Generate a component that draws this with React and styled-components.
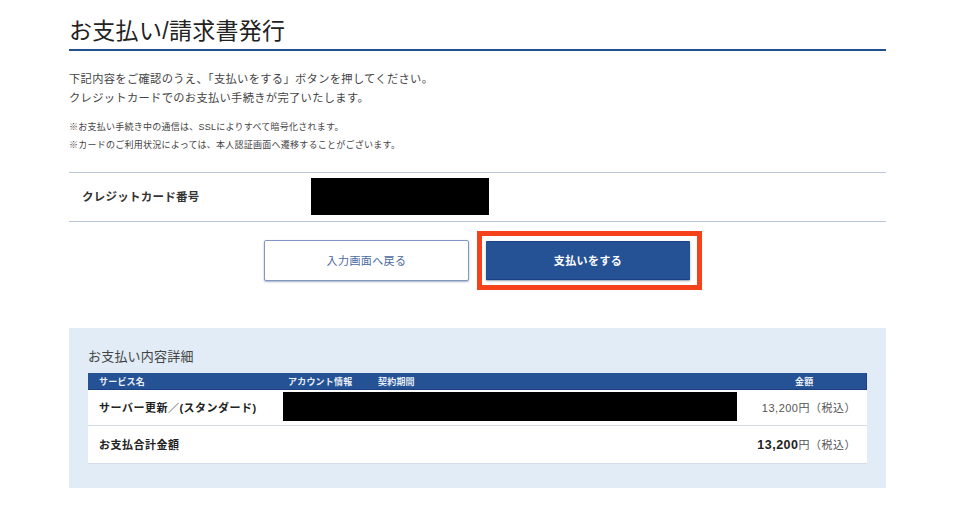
import React from 'react';
import styled, { createGlobalStyle } from 'styled-components';

const Global = createGlobalStyle`
  html, body { margin: 0; padding: 0; background: #fff; }
  body { font-family: "Liberation Sans", "Noto Sans CJK JP", sans-serif; color: #333; }
`;
const Page = styled.div`
  width: 817px; height: 523px; margin-left: 69px; padding-top: 16px; box-sizing: border-box; overflow: hidden;
`;
const Title = styled.h1`
  margin: 0; height: 35px; box-sizing: border-box; border-bottom: 2px solid #24508f;
  font-size: 23px; line-height: 30px; font-weight: 400; color: #222; letter-spacing: 0.3px;
`;
const Lead = styled.p`
  margin: 19px 0 0; font-size: 11.25px; line-height: 19px; color: #444; letter-spacing: 0.33px;
`;
const Notes = styled.div`
  margin-top: 11px; font-size: 9px; line-height: 17.5px; color: #444; letter-spacing: 0.25px;
`;
const CardRow = styled.div`
  margin-top: 18px; height: 50px; box-sizing: border-box; padding-bottom: 2px;
  border-top: 1px solid #b9c7d8; border-bottom: 1px solid #b9c7d8;
  display: grid; grid-template-columns: 242px 178px; align-items: center;
`;
const CardLabel = styled.div`
  padding-left: 13px; font-size: 11.5px; font-weight: 700; color: #333; letter-spacing: 0.25px;
`;
const Redacted = styled.div`
  background: #000; height: ${p => p.$h}px;
`;
const Actions = styled.div`
  margin-top: 8px; height: 60px; display: flex; align-items: center; padding-left: 195px;
`;
const BackButton = styled.button`
  width: 205px; height: 41px; box-sizing: border-box; padding: 0; background: #fff; border: 1px solid #7f97c2; border-radius: 2px;
  box-shadow: 0 1px 2px rgba(60,80,120,.45); color: #4a6a9f; font: 400 11px "Liberation Sans", "Noto Sans CJK JP", sans-serif; letter-spacing: 0.4px;
`;
const Highlight = styled.div`
  margin-left: 8px; width: 225px; height: 59px; box-sizing: border-box; border: 5px solid #f5421a;
  display: flex; align-items: center; padding-left: 4px;
`;
const PayButton = styled.button`
  width: 204px; height: 39px; padding: 0; box-sizing: border-box; background: #245294; border: 0; border-top: 1px solid #1c3f85; border-bottom: 1px solid #1c3f85; border-radius: 1px;
  box-shadow: 0 1px 2px rgba(40,60,100,.5); color: #fff; font: 700 11px "Liberation Sans", "Noto Sans CJK JP", sans-serif; letter-spacing: 0.4px;
`;
const Panel = styled.section`
  margin-top: 38px; height: 160px; box-sizing: border-box; background: #e1ecf6; padding: 20px 19px 0;
`;
const PanelTitle = styled.h2`
  margin: 0; height: 25px; font-size: 13px; line-height: 18px; font-weight: 400; color: #444; letter-spacing: 0.2px;
`;
const HeaderRow = styled.div`
  height: 17px; box-sizing: border-box; background: #245294; border: 1px solid #1c3f85; border-width: 0 1px 1px 0; color: #e8eef7;
  display: grid; grid-template-columns: 189px 90px 1fr 71px; align-items: center; padding-left: 11px;
  font-size: 9px; font-weight: 700; letter-spacing: 0.2px;
`;
const Row = styled.div`
  height: ${p => p.$h}px; box-sizing: border-box; background: #fff; border-bottom: 1px solid #d3dde9;
  display: flex; align-items: center; padding: 0 11px 2px; font-size: 11px; color: #444;
`;
const RowName = styled.div`
  font-weight: 700; color: #222; letter-spacing: 0.5px; width: ${p => p.$w}px; flex: none; white-space: nowrap;
`;
const Price = styled.div`
  margin-left: auto; letter-spacing: 0.5px; color: #555; white-space: nowrap;
`;
const Strong = styled.b`
  color: #222; font-size: 12.5px;
`;
const BlackCell = styled(Redacted)`
  width: 454px; flex: none;
`;

export default function App() {
  return (
    <Page>
      <Global />
      <Title>お支払い/請求書発行</Title>
      <Lead>
        下記内容をご確認のうえ、「支払いをする」ボタンを押してください。<br />
        クレジットカードでのお支払い手続きが完了いたします。
      </Lead>
      <Notes>
        ※お支払い手続き中の通信は、SSLによりすべて暗号化されます。<br />
        ※カードのご利用状況によっては、本人認証画面へ遷移することがございます。
      </Notes>
      <CardRow>
        <CardLabel>クレジットカード番号</CardLabel>
        <Redacted $h={37} />
      </CardRow>
      <Actions>
        <BackButton>入力画面へ戻る</BackButton>
        <Highlight><PayButton>支払いをする</PayButton></Highlight>
      </Actions>
      <Panel>
        <PanelTitle>お支払い内容詳細</PanelTitle>
        <HeaderRow>
          <span>サービス名</span>
          <span>アカウント情報</span>
          <span>契約期間</span>
          <span>金額</span>
        </HeaderRow>
        <Row $h={36}>
          <RowName $w={184}>サーバー更新／(スタンダード)</RowName>
          <BlackCell $h={29} />
          <Price>13,200円（税込）</Price>
        </Row>
        <Row $h={38}>
          <RowName $w={184}>お支払合計金額</RowName>
          <Price><Strong>13,200</Strong>円（税込）</Price>
        </Row>
      </Panel>
    </Page>
  );
}
